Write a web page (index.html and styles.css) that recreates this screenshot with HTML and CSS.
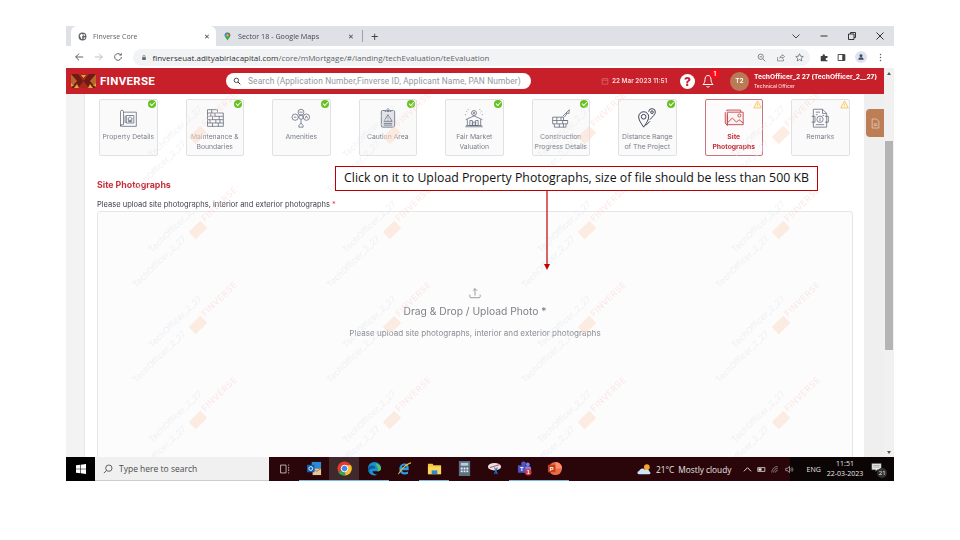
FILE: index.html
```html
<!DOCTYPE html>
<html lang="en">
<head>
<meta charset="utf-8">
<title>Finverse Core</title>
<link rel="stylesheet" href="styles.css">
</head>
<body>
<div class="screen">
  <div class="tabstrip">
    <div class="tab tab-active">
      <svg class="favicon" viewBox="0 0 16 16"><circle cx="8" cy="8" r="7" fill="#5f6368"/><path d="M3 6l3-3 2 1 1 2-2 2 1 3-2 2-1-3zM11 3l2 3-2 1-2-2zM10 10l3-1-1 3-2 1z" fill="#fff"/></svg>
      <span class="tab-title">Finverse Core</span>
      <span class="tab-x">&#10005;</span>
    </div>
    <div class="tab tab-other">
      <svg class="favicon" viewBox="0 0 16 16"><path d="M8 1a5 5 0 0 1 5 5c0 3-3 5-5 9-2-4-5-6-5-9a5 5 0 0 1 5-5z" fill="#34a853"/><path d="M3 6a5 5 0 0 1 5-5l2 1-5 6z" fill="#4285f4"/><path d="M10 1.500a5 5 0 0 1 3 4.500l-3 1z" fill="#ea4335"/><circle cx="8" cy="6" r="2" fill="#fbbc04"/></svg>
      <span class="tab-title tab-title-dark">Sector 18 - Google Maps</span>
      <span class="tab-x">&#10005;</span>
    </div>
    <span class="tab-sep"></span>
    <span class="tab-plus">+</span>
    <div class="win-controls">
      <svg viewBox="0 0 10 10"><path d="M1.500 3.500L5 7l3.500-3.500" fill="none" stroke="#444" stroke-width="1"/></svg>
      <svg viewBox="0 0 10 10"><path d="M1.500 5h7" stroke="#333" stroke-width="1"/></svg>
      <svg viewBox="0 0 10 10"><path d="M1.500 3h5.500v5.500h-5.500zM3.500 3V1.500h5v5H7" fill="none" stroke="#333" stroke-width="1"/></svg>
      <svg viewBox="0 0 10 10"><path d="M1.500 1.500l7 7M8.500 1.500l-7 7" stroke="#333" stroke-width="1"/></svg>
    </div>
  </div>

  <div class="toolbar">
    <svg class="tb-icon" viewBox="0 0 12 12"><path d="M11 6H2M6 2L2 6l4 4" fill="none" stroke="#5f6368" stroke-width="1.200"/></svg>
    <svg class="tb-icon" viewBox="0 0 12 12"><path d="M1 6h9M6 2l4 4-4 4" fill="none" stroke="#bcc0c4" stroke-width="1.200"/></svg>
    <svg class="tb-icon" viewBox="0 0 12 12"><path d="M10 6a4 4 0 1 1-1.200-2.900" fill="none" stroke="#5f6368" stroke-width="1.200"/><path d="M10.500 1v3.200H7.300z" fill="#5f6368"/></svg>
    <div class="omnibox">
      <svg class="lock" viewBox="0 0 10 10"><rect x="2" y="4.500" width="6" height="4.500" fill="#5f6368"/><path d="M3.300 4.500V3a1.700 1.700 0 0 1 3.400 0v1.500" fill="none" stroke="#5f6368"/></svg>
      <span class="url"><b>finverseuat.adityabirlacapital.com</b>/core/mMortgage/#/landing/techEvaluation/teEvaluation</span>
      <div class="omni-actions">
        <svg viewBox="0 0 12 12"><circle cx="5" cy="5" r="3.500" fill="none" stroke="#5f6368"/><path d="M7.700 7.700L11 11M3.500 5h3" stroke="#5f6368"/></svg>
        <svg viewBox="0 0 12 12"><path d="M2 5.500V10.500h8V8M5 7c0-2.500 2-3.500 3.500-3.500V2l3 2.700-3 2.700V5.500C7 5.500 5.800 6 5 7z" fill="none" stroke="#5f6368" stroke-width=".8"/></svg>
        <svg viewBox="0 0 12 12"><path d="M6 1l1.500 3.300 3.500.4-2.600 2.400.7 3.500L6 8.800l-3.100 1.800.7-3.500L1 4.700l3.500-.4z" fill="none" stroke="#5f6368"/></svg>
      </div>
    </div>
    <div class="tb-right">
      <svg viewBox="0 0 12 12"><path d="M1 4h2.500V3a1.500 1.500 0 0 1 3 0v1H10v2.500H9a1.500 1.500 0 0 0 0 3h1V11H1z" fill="#3c4043"/></svg>
      <svg viewBox="0 0 12 12"><path d="M1.500 2h9v8h-9z" fill="none" stroke="#3c4043" stroke-width="1.200"/><path d="M7 2h3.500v8H7z" fill="#3c4043"/></svg>
      <span class="profile"><svg viewBox="0 0 12 12"><circle cx="6" cy="4" r="2.200" fill="#3c4a6b"/><path d="M2 10c0-2.500 2-3.500 4-3.500s4 1 4 3.500z" fill="#3c4a6b"/></svg></span>
      <svg viewBox="0 0 12 12"><circle cx="6" cy="2" r="1" fill="#5f6368"/><circle cx="6" cy="6" r="1" fill="#5f6368"/><circle cx="6" cy="10" r="1" fill="#5f6368"/></svg>
    </div>
  </div>

  <div class="viewport">
    <div class="app">
      <header class="app-header">
        <svg class="brand-logo" viewBox="0 0 25 14"><rect width="25" height="14" fill="#6f1a15"/><path d="M0 0l6 7-6 7zM25 0l-6 7 6 7z" fill="#b8662a"/><path d="M7 0l5.500 7L18 0zM12.500 7L7 14h11z" fill="#a82a1c"/><path d="M3 14l3-4 2 4zM17 14l2-4 3 4zM10 1h5l-2.500 3zM0 9l3 3H0zM25 9l-3 3h3z" fill="#e0a83a"/></svg>
        <span class="brand-name">FINVERSE</span>
        <div class="search">
          <svg viewBox="0 0 12 12"><circle cx="5" cy="5" r="3.300" fill="none" stroke="#333" stroke-width="1.300"/><path d="M7.500 7.500L11 11" stroke="#333" stroke-width="1.500"/></svg>
          <span>Search (Application Number,Finverse ID, Applicant Name, PAN Number)</span>
        </div>
        <svg class="cal" viewBox="0 0 10 10"><path d="M1.500 2h7v7h-7zM1.500 4h7" fill="none" stroke="#e0776f" stroke-width=".8"/></svg>
        <span class="date">22 Mar 2023 11:51</span>
        <span class="help">?</span>
        <span class="bell">
          <svg viewBox="0 0 14 14"><path d="M7 1.500C4.800 1.500 4 3.500 4 5.500c0 2.500-1 4-2 5h10c-1-1-2-2.500-2-5 0-2-.8-4-3-4zM5.500 12.500c.5.700 2.500.7 3 0" fill="none" stroke="#fff" stroke-width="1"/></svg>
          <i class="bell-count">1</i>
        </span>
        <span class="avatar">T2</span>
        <div class="user">
          <strong>TechOfficer_2 27 (TechOfficer_2__27)</strong>
          <span>Technical Officer</span>
        </div>
      </header>

      <div class="app-body">
        <div class="gutter-left"></div>
        <main class="content">
          <div class="steps">
            <div class="card">
              <svg class="card-icon" viewBox="0 0 24 24"><path d="M3 4.500a1.800 1.800 0 0 1 3.600 0V20H5a2 2 0 0 0-2 2V4.500zM6.600 5H22v17H5a2 2 0 0 1-2-2" /><path d="M10 9h9v9h-9zM11.500 13l3-2.500 3 2.500M12.500 12.500V16.500h4v-4M14 16.500v-2h1.200v2M8.500 9v9"/></svg>
              <span class="card-label">Property Details</span>
              <i class="badge badge-ok"></i>
            </div>
            <div class="card">
              <svg class="card-icon" viewBox="0 0 24 24"><path d="M3 2h12v4h7v4h0v4h0v4h0v4H3V2zM3 6h12M3 10h19M3 14h19M3 18h19M8 2v4M12 6v4M7 6v4M17 10v4M9 10v4M13 14v4M6 14v4M18 14v4M9 18v4M16 18v4"/></svg>
              <span class="card-label">Maintenance &amp;<br>Boundaries</span>
              <i class="badge badge-ok"></i>
            </div>
            <div class="card">
              <svg class="card-icon" viewBox="0 0 24 24"><circle cx="12" cy="5" r="3.500"/><circle cx="5" cy="11" r="3.800"/><circle cx="18.500" cy="11" r="3.800"/><circle cx="12" cy="11" r="2.500"/><path d="M3.500 11h3M10 5h4M17 12.500l1.500-3 1.500 3M12 13.500V18M9.500 21l2.500-3 2.500 3v2h-5z"/></svg>
              <span class="card-label">Amenities</span>
              <i class="badge badge-ok"></i>
            </div>
            <div class="card">
              <svg class="card-icon" viewBox="0 0 24 24"><rect x="4" y="3" width="16" height="20" rx="1.500" fill="#e1e3e8"/><circle cx="12" cy="2.500" r="1.500"/><path d="M8 4h8M12 8l5 8H7zM12 11v2.500M12 14.500v.5M7 18.500h10M7 20.500h10"/></svg>
              <span class="card-label">Caution Area</span>
              <i class="badge badge-ok"></i>
            </div>
            <div class="card">
              <svg class="card-icon" viewBox="0 0 24 24"><circle cx="12" cy="6" r="3"/><path d="M11 4.500l2 3M13 4.500l-2 3M12 1v0M3 4l1 1M21 4l-1 1M1.500 8h1M21.500 8h1M5 1.500v1M19 1.500v1M2 14l10-4.500L22 14M4 13.500V21M20 13.500V21M1.500 22.500h21M2.500 21h19M7 15h3v6H7zM14 15h3v6h-3zM10.500 17h3v4h-3z"/></svg>
              <span class="card-label">Fair Market<br>Valuation</span>
              <i class="badge badge-ok"></i>
            </div>
            <div class="card">
              <svg class="card-icon" viewBox="0 0 24 24"><path d="M2 11h13v4h5v4h-2v4H4v-4H2zM2 15h18M4 19h14M7 11v4M12 11v4M7 15v4M14 15v4M10 19v4M15 19v4M14 10l4-4 1 1-3 4M18 6l4-4-.5 4.500z"/></svg>
              <span class="card-label">Construction<br>Progress Details</span>
              <i class="badge badge-ok"></i>
            </div>
            <div class="card">
              <svg class="card-icon card-icon-dark" viewBox="0 0 24 24"><path d="M8 23C4 17 2 14 2 10.500a6 6 0 0 1 12 0C14 14 12 17 8 23z"/><circle cx="8" cy="10.500" r="2.800"/><path d="M15.500 14C19 10 22 7.500 22 5a4 4 0 0 0-8-.5"/><circle cx="18" cy="5" r="1.600"/><path d="M10.500 21l5-5"/></svg>
              <span class="card-label">Distance Range<br>of The Project</span>
              <i class="badge badge-ok"></i>
            </div>
            <div class="card card-active">
              <svg class="card-icon card-icon-red" viewBox="0 0 24 24"><path d="M1.500 5v13l2.500 3V8M4 2.500h16v2.500M2.500 3.500l2-1M4 5h19v15H4z"/><path d="M4 18l6-6 5 5 3-3 5 4"/><circle cx="18.500" cy="9" r="1.800"/></svg>
              <span class="card-label card-label-red">Site<br>Photographs</span>
              <svg class="warn" viewBox="0 0 10 10"><path d="M5 1l4.200 7.800H.8z" fill="#fff8e6" stroke="#f4bf4f" stroke-width=".9"/><path d="M5 4v2.500M5 7.200v.5" stroke="#f4bf4f" stroke-width=".8"/></svg>
            </div>
            <div class="card">
              <svg class="card-icon" viewBox="0 0 24 24"><path d="M4 1.500h11l5 5V23H4zM15 1.500v5h5M7 5h5M7 8h2M15 9h2M2 10h4v7H2M18 10h4v7h-4M7 20h10"/><circle cx="12" cy="13.500" r="3.800"/><path d="M12 12v4M12 10.700v.5"/></svg>
              <span class="card-label">Remarks</span>
              <svg class="warn" viewBox="0 0 10 10"><path d="M5 1l4.200 7.800H.8z" fill="#fff8e6" stroke="#f4bf4f" stroke-width=".9"/><path d="M5 4v2.500M5 7.200v.5" stroke="#f4bf4f" stroke-width=".8"/></svg>
            </div>
          </div>

          <h2 class="section-title">Site Photographs</h2>
          <p class="field-label">Please upload site photographs, interior and exterior photographs <em>*</em></p>
          <div class="dropzone">
            <svg class="upload" viewBox="0 0 14 14"><path d="M1 9v2.500c0 .5.500 1 1 1h10c.5 0 1-.5 1-1V9M7 10V2M4.500 4.300L7 1.800l2.500 2.500" fill="none" stroke="#7c7f85" stroke-width=".9"/></svg>
            <div class="drop-title">Drag &amp; Drop / Upload Photo *</div>
            <div class="drop-sub">Please upload site photographs, interior and exterior photographs</div>
          </div>
        </main>
        <aside class="gutter-right">
          <div class="side-tab">
            <svg viewBox="0 0 12 14"><path d="M1.500 1h6l3 3v9h-9zM3.500 7.500h5M3.500 9.500h5" fill="none" stroke="#e9d2c2" stroke-width="1"/></svg>
          </div>
        </aside>
      </div>
    </div>
    <div class="scrollbar">
      <i class="sb-up"></i>
      <div class="sb-thumb"></div>
      <i class="sb-down"></i>
    </div>

    <svg class="watermarks" viewBox="0 0 818 363">
      <defs>
        <g id="wm">
          <text x="0" y="0" class="wm-text" transform="translate(-46 23) rotate(-44)">TechOfficer_2_27</text>
          <text x="0" y="0" class="wm-text" transform="translate(-62 58) rotate(-44)">TechOfficer_2_27</text>
          <rect x="-8" y="-5" width="16" height="10" class="wm-logo" transform="rotate(-44)"/>
          <text x="0" y="0" class="wm-brand" transform="translate(7 -8) rotate(-44)">FINVERSE</text>
        </g>
      </defs>
      <use href="#wm" x="132" y="41"/><use href="#wm" x="326" y="41"/><use href="#wm" x="521" y="41"/><use href="#wm" x="715" y="41"/>
      <use href="#wm" x="132" y="136"/><use href="#wm" x="326" y="136"/><use href="#wm" x="521" y="136"/><use href="#wm" x="715" y="136"/>
      <use href="#wm" x="132" y="231"/><use href="#wm" x="326" y="231"/><use href="#wm" x="521" y="231"/><use href="#wm" x="715" y="231"/>
      <use href="#wm" x="132" y="326"/><use href="#wm" x="326" y="326"/><use href="#wm" x="521" y="326"/><use href="#wm" x="715" y="326"/>
    </svg>
  </div>

  <footer class="taskbar">
    <div class="start"><svg viewBox="0 0 12 12"><path d="M0 1.600L5 1v4.600H0zM5.700.9L12 0v5.600H5.700zM0 6.300h5v4.800l-5-.7zM5.700 6.300H12V12l-6.300-.9z" fill="#fff"/></svg></div>
    <div class="task-search">
      <svg viewBox="0 0 12 12"><circle cx="7" cy="5" r="3.800" fill="none" stroke="#444"/><path d="M4.300 7.700L1 11" stroke="#444"/></svg>
      <span>Type here to search</span>
    </div>
    <div class="task-apps">
      <span class="app-slot"><svg class="taskview" viewBox="0 0 14 12"><path d="M2 1h7v10H2zM11.500 1h1.500M11.500 4h1.500M11.500 6h1.500M11.500 8h1.500M11.500 11h1.500" fill="none" stroke="#d8d4d4" stroke-width="1"/></svg></span>
      <span class="app-slot running"><svg viewBox="0 0 16 16"><rect x="5" y="1" width="10" height="7" fill="#2c8bd8"/><rect x="6" y="8" width="9" height="7" fill="#e9c79b"/><path d="M6 8l4.500 3L15 8" fill="none" stroke="#a87c50"/><rect x="0" y="4" width="8" height="8" fill="#0f5fb0"/><circle cx="4" cy="8" r="2" fill="none" stroke="#fff"/></svg></span>
      <span class="app-slot running active"><svg viewBox="0 0 16 16"><circle cx="8" cy="8" r="7.500" fill="#e33b2e"/><path d="M8 8L1.500 12A7.500 7.500 0 0 0 9 15.400z" fill="#2da94f"/><path d="M8 4.500h6.900A7.500 7.500 0 0 1 9 15.400z" fill="#fbc02d"/><circle cx="8" cy="8" r="3.500" fill="#4285f4" stroke="#fff"/></svg></span>
      <span class="app-slot running"><svg viewBox="0 0 16 16"><path d="M1 8a7 7 0 0 1 14 0c0 2-2 3-4 3H6c0 2 2 3.500 5 3.500-1 .7-2 1-3 1A7 7 0 0 1 1 8z" fill="#1b8fcf"/><path d="M1 8c1-3 5-4 7-2.500 1 .8 1 2 .5 2.500H6C4 8 2 9 2.500 12 1.500 11 1 9.500 1 8z" fill="#0d5a9c"/><path d="M9 3c3 0 6 2 6 5 0 2-2 3-4 3 1-1 1-2.500 0-4-.5-1.500-1-3-2-4z" fill="#58c45d"/></svg></span>
      <span class="app-slot"><svg viewBox="0 0 16 16"><path d="M12.500 9.800H5.200c.2 2 3.800 3 6.600 1.300v2.600c-4 1.700-9.300.2-9.300-5 0-4.600 4.300-7 7.800-5.500 2 .9 2.400 3.500 2.200 6.600zM5.200 7h4.800c0-2.800-4.400-2.800-4.800 0z" fill="#2f9be0"/><path d="M1.500 14C4 9 11 2.500 15 2" fill="none" stroke="#f5c33b" stroke-width="1.100"/></svg></span>
      <span class="app-slot running"><svg viewBox="0 0 16 16"><path d="M1 3h5l1 1.500h8V14H1z" fill="#f3c63f"/><rect x="1" y="6" width="14" height="8" fill="#fbd75e"/><rect x="5" y="10" width="6" height="4" fill="#2d89c9"/></svg></span>
      <span class="app-slot"><svg viewBox="0 0 14 16"><rect x="1" y="0" width="12" height="16" fill="#5a7183"/><rect x="3" y="2" width="8" height="3" fill="#bcd"/><path d="M3 7h2v2H3zM6 7h2v2H6zM9 7h2v2H9zM3 10h2v2H3zM6 10h2v2H6zM9 10h2v2H9z" fill="#e8eef2"/></svg></span>
      <span class="app-slot"><svg viewBox="0 0 16 16"><ellipse cx="8" cy="6" rx="7" ry="4" fill="#e4e6ea"/><path d="M3 7l10-3" stroke="#d43c3c"/><path d="M8 7l3 7M11 7l-3 7" stroke="#2b78c5" stroke-width="1.200"/></svg></span>
      <span class="app-slot running"><svg viewBox="0 0 16 16"><circle cx="11.500" cy="3.500" r="2" fill="#7b83eb"/><circle cx="7" cy="3" r="2.500" fill="#5059c9"/><rect x="6" y="5.500" width="9" height="7" rx="2" fill="#7b83eb"/><rect x="1" y="4.500" width="8" height="8" fill="#4b53bc"/><text x="5" y="11" class="teams-t">T</text><circle cx="12" cy="12" r="3.500" fill="#d13438"/><text x="12" y="14.200" class="teams-n">1</text></svg></span>
      <span class="app-slot running"><svg viewBox="0 0 16 16"><circle cx="9" cy="8" r="7" fill="#ed6c47"/><path d="M9 1a7 7 0 0 1 7 7H9z" fill="#ff8f6b"/><rect x="1" y="4" width="8" height="8" fill="#c43e1c"/><text x="5" y="10.800" class="teams-t">P</text></svg></span>
    </div>
    <div class="weather">
      <svg viewBox="0 0 16 12"><circle cx="10.500" cy="4" r="3" fill="#f6a623"/><path d="M2 11.500c-2 0-2-3 .3-3.300C3 5.500 7 4.500 8.500 7c2-1 5 0 5 2.200 1 0 1.500 2.300-.5 2.300z" fill="#cfe3f5"/></svg>
      <span>21°C</span><span>Mostly cloudy</span>
    </div>
    <div class="tray">
      <svg viewBox="0 0 10 10"><path d="M1 7l4-4 4 4" fill="none" stroke="#eee" stroke-width="1"/></svg>
      <svg viewBox="0 0 12 10"><path d="M1 2.500h9.500v5H1z" fill="none" stroke="#eee"/><path d="M2 3.500h4v3H2z" fill="#eee"/></svg>
      <svg viewBox="0 0 12 10"><path d="M1 9a8 8 0 0 1 8-8M3.500 9A5.500 5.500 0 0 1 9 3.500M6 9a3 3 0 0 1 3-3" fill="none" stroke="#bbb" stroke-width=".8"/></svg>
      <svg viewBox="0 0 12 10"><path d="M1 3.500h2L6 1v8L3 6.500H1zM7.500 3c1 1 1 3 0 4M9 2c2 2 2 4 0 6" fill="none" stroke="#ddd" stroke-width=".8"/></svg>
      <span class="lang">ENG</span>
      <div class="clock"><span>11:51</span><span>22-03-2023</span></div>
      <span class="notif">
        <svg viewBox="0 0 14 12"><path d="M1 1h12v8H8l-2 2V9H1zM3 3.500h8M3 5.500h8" fill="#e8e8e8" stroke="#555" stroke-width=".5"/></svg>
        <i>21</i>
      </span>
    </div>
  </footer>
</div>

<div class="callout">Click on it to Upload Property Photographs, size of file should be less than 500 KB</div>
<svg class="callout-arrow" viewBox="0 0 8 80"><path d="M4 0V74" stroke="#c00000" stroke-width="1.200"/><path d="M1 73h6l-3 6z" fill="#c00000"/></svg>
</body>
</html>
```

FILE: styles.css
```css
* { box-sizing: border-box; }
html, body { margin: 0; padding: 0; background: #fff; }
body { width: 960px; height: 540px; overflow: hidden; position: relative; font-family: "Open Sans", "Liberation Sans", sans-serif; }
svg { display: block; flex: none; }

.screen { width: 828px; height: 455px; margin: 26px 0 0 66px; display: flex; flex-direction: column; overflow: hidden; filter: blur(0.3px); }

/* browser chrome */
.tabstrip { height: 20px; background: #dee1e6; display: flex; align-items: stretch; padding-left: 5px; flex: none; position: relative; }
.tab { width: 145px; display: flex; align-items: center; font-size: 7px; color: #5f6368; }
.tab-active { background: #fff; border-radius: 6px 6px 0 0; padding: 0 6px 0 7px; }
.tab-other { padding: 0 7px 0 7px; }
.favicon { width: 9px; height: 9px; margin-right: 6px; }
.tab-title { flex: 1; white-space: nowrap; }
.tab-title-dark { color: #45494e; font-size: 7.200px; }
.tab-x { font-size: 7px; color: #3c4043; }
.tab-sep { width: 1px; height: 12px; background: #9da1a6; align-self: center; margin-left: 1px; }
.tab-plus { font-size: 13px; line-height: 20px; color: #3c4043; margin-left: 8px; }
.win-controls { margin-left: auto; display: flex; align-items: center; gap: 18px; padding-right: 9px; }
.win-controls svg { width: 10px; height: 10px; }

.toolbar { height: 22px; background: #fff; display: flex; align-items: center; padding-left: 8px; flex: none; }
.tb-icon { width: 10px; height: 10px; margin-right: 9.500px; }
.omnibox { width: 677px; height: 17px; border-radius: 9px; background: #f1f3f4; margin-left: 0; display: flex; align-items: center; padding: 0 0 0 8px; }
.lock { width: 6px; height: 7px; margin-right: 6px; }
.url { font-size: 8px; color: #5f6368; white-space: nowrap; font-family: "Open Sans", sans-serif; }
.url b { font-weight: 400; color: #303134; }
.omni-actions { margin-left: auto; display: flex; gap: 10px; padding-right: 6px; }
.omni-actions svg { width: 9px; height: 9px; }
.tb-right { flex: 1; display: flex; align-items: center; justify-content: space-between; padding: 0 9px 0 10px; }
.tb-right svg { width: 9px; height: 9px; }
.profile { width: 12px; height: 12px; background: #dfe3ee; border-radius: 50%; display: flex; align-items: center; justify-content: center; }
.profile svg { width: 8px; height: 8px; }

.viewport { flex: 1; min-height: 0; display: flex; position: relative; }
.app { flex: 1; min-width: 0; display: flex; flex-direction: column; font-family: Inter, Roboto, sans-serif; }

/* app header */
.app-header { height: 26px; background: #c8202b; display: flex; align-items: center; padding-left: 5px; color: #fff; flex: none; }
.brand-logo { width: 25px; height: 14px; }
.brand-name { font-family: Roboto, sans-serif; font-weight: 700; font-size: 11.500px; letter-spacing: .3px; margin-left: 4px; width: 126px; }
.search { width: 305px; height: 16px; background: #fff; border-radius: 8px; display: flex; align-items: center; padding-left: 7px; color: #94979d; font-size: 8.400px; font-family: Roboto, sans-serif; letter-spacing: .12px; white-space: nowrap; }
.search svg { width: 8px; height: 8px; margin-right: 7px; }
.cal { width: 8px; height: 8px; margin-left: 70px; }
.date { font-size: 6.400px; font-weight: 600; color: #f6d9d9; margin-left: 3px; width: 56px; white-space: nowrap; }
.help { width: 15px; height: 15px; border-radius: 50%; background: #fff; color: #c8202b; font-size: 12px; font-weight: 800; text-align: center; line-height: 15px; margin-left: 12px; }
.bell { position: relative; width: 14px; height: 14px; margin-left: 6px; }
.bell svg { width: 14px; height: 14px; }
.bell-count { position: absolute; top: -5px; right: -5px; width: 10px; height: 10px; background: #fb0d1a; border-radius: 50%; font-size: 5.500px; font-style: normal; font-weight: 700; text-align: center; line-height: 10px; }
.avatar { width: 19px; height: 19px; border-radius: 50%; background: #b87b55; font-size: 6.500px; font-weight: 600; text-align: center; line-height: 19px; margin-left: 15px; }
.user { margin-left: 5px; display: flex; flex-direction: column; white-space: nowrap; }
.user strong { font-size: 6.700px; font-weight: 700; line-height: 9px; }
.user span { font-size: 5px; font-weight: 500; line-height: 8px; color: #f5dada; }

/* body */
.app-body { flex: 1; min-height: 0; display: flex; }
.gutter-left { width: 19px; background: #f3f3f3; box-shadow: inset -1px 0 1px #e8e8e8; flex: none; }
.content { flex: 1; min-width: 0; background: #fff; padding: 5px 11px 0 12px; overflow: hidden; }
.gutter-right { width: 20px; background: #efefef; flex: none; padding: 15px 0 0 2px; }
.side-tab { width: 18px; height: 28px; background: #bd7d55; border-radius: 4px 0 0 4px; display: flex; align-items: center; justify-content: center; }
.side-tab svg { width: 9px; height: 11px; }

.steps { display: grid; grid-template-columns: repeat(9, 58.500px); column-gap: 28px; margin-left: 2px; }
.card { position: relative; height: 57px; background: #fafafa; border: 1px solid #e0e1e3; border-radius: 2px; padding-top: 8px; display: flex; flex-direction: column; align-items: center; }
.card-active { border-color: #c9757b; background: #fdfbfb; }
.card-icon { width: 20px; height: 20px; fill: none; stroke: #5c6577; stroke-width: .9; }
.card-icon-dark { stroke: #3c4454; stroke-width: 1.200; }
.card-icon-red { stroke: #c0474f; stroke-width: 1.100; fill: #fdf3f3; }
.card-label { margin-top: 4px; font-size: 6.800px; line-height: 10px; color: #7c818b; text-align: center; white-space: nowrap; font-family: Inter, sans-serif; }
.card-label-red { color: #c4303c; font-weight: 700; }
.badge { position: absolute; top: 0; right: 1px; width: 8px; height: 8px; border-radius: 50%; background: #67c11f; }
.badge-ok::after { content: ""; position: absolute; left: 2.200px; top: 1.800px; width: 3.500px; height: 2px; border-left: 1px solid #fff; border-bottom: 1px solid #fff; transform: rotate(-45deg); }
.warn { position: absolute; top: 0; right: 0; width: 9px; height: 9px; }

.section-title { margin: 24px 0 0; font-size: 8.800px; line-height: 10px; font-weight: 700; color: #c8303c; font-family: Inter, sans-serif; }
.field-label { margin: 10px 0 0; font-size: 7.500px; line-height: 10px; color: #3d4148; white-space: nowrap; font-family: Inter, sans-serif; }
.field-label em { color: #e0454f; font-style: normal; }
.dropzone { margin-top: 1px; height: 300px; background: #fcfcfc; border: 1px solid #e6e6e6; border-radius: 3px; padding-top: 75px; display: flex; flex-direction: column; align-items: center; }
.upload { width: 12px; height: 12px; }
.drop-title { margin-top: 6px; font-size: 10.300px; line-height: 12px; color: #7e8187; font-family: Inter, sans-serif; }
.drop-sub { margin-top: 11px; font-size: 8.100px; line-height: 10px; color: #8a8d93; font-family: Inter, sans-serif; }

/* scrollbar */
.scrollbar { width: 10px; background: #f1f1f1; position: relative; flex: none; }
.sb-thumb { position: absolute; top: 73px; left: 1px; width: 8px; height: 209px; background: #b4b4b4; }
.sb-up, .sb-down { position: absolute; left: 3px; width: 0; height: 0; border-left: 2.500px solid transparent; border-right: 2.500px solid transparent; }
.sb-up { top: 4px; border-bottom: 3px solid #555; }
.sb-down { bottom: 3px; border-top: 3px solid #555; }

/* watermark */
.watermarks { position: absolute; left: 0; top: 26px; width: 818px; height: 363px; pointer-events: none; }
.wm-text { font-family: Inter, sans-serif; font-size: 8.500px; fill: #e4e8ef; fill-opacity: .6; }
.wm-brand { font-family: Inter, sans-serif; font-size: 8.500px; letter-spacing: .6px; fill: #f9d9d6; fill-opacity: .6; }
.wm-logo { fill: #fbdccb; fill-opacity: .55; }

/* taskbar */
.taskbar { height: 24px; background: #2a060a; display: flex; align-items: stretch; flex: none; }
.start { width: 29px; background: #000; display: flex; align-items: center; justify-content: center; }
.start svg { width: 10px; height: 10px; }
.task-search { width: 174px; background: #f0f0f0; border-bottom: 1px solid #ccc; display: flex; align-items: center; padding-left: 8px; font-size: 8.500px; color: #4c4c4c; }
.task-search svg { width: 10px; height: 10px; margin-right: 6px; }
.task-apps { display: flex; margin-left: 0; width: 305px; }
.app-slot { width: 30px; display: flex; align-items: center; justify-content: center; border-bottom: 1px solid transparent; }
.app-slot svg { width: 15px; height: 15px; }
.app-slot .taskview { width: 11px; height: 10px; }
.running { border-bottom-color: #76b9ed; }
.active { background: #40292c; }
.teams-t { font-family: "Liberation Sans", sans-serif; font-size: 6px; font-weight: 700; fill: #fff; text-anchor: middle; }
.teams-n { font-family: "Liberation Sans", sans-serif; font-size: 6px; font-weight: 700; fill: #fff; text-anchor: middle; }
.weather { display: flex; align-items: center; gap: 4px; margin-left: 63px; font-size: 8.300px; color: #e8e4e4; white-space: nowrap; width: 100px; flex: none; }
.weather svg { width: 15px; height: 12px; }
.tray { flex: 1; min-width: 0; display: flex; align-items: center; background: linear-gradient(to right, #2a060a 34%, #0c0506 34%); padding-left: 5.500px; color: #e8e8e8; font-size: 7px; }
.tray svg { width: 9px; height: 9px; margin-right: 5px; }
.lang { margin-left: 8px; }
.clock { display: flex; flex-direction: column; align-items: center; margin-left: 6px; line-height: 10px; font-size: 7px; white-space: nowrap; }
.notif { position: relative; width: 14px; height: 14px; margin-left: 8px; flex: none; }
.notif svg { width: 11px; height: 11px; margin: 0; }
.notif i { position: absolute; right: -2px; bottom: -2px; width: 10px; height: 10px; border-radius: 50%; background: #333; font-style: normal; font-size: 6px; line-height: 10px; text-align: center; color: #eee; }

/* slide annotation */
.callout { position: absolute; left: 335px; top: 166px; width: 483px; height: 25px; background: #fff; border: 1.500px solid #c00000; font-family: "Open Sans", sans-serif; font-size: 12.300px; line-height: 22px; color: #111; text-align: center; white-space: nowrap; }
.callout-arrow { position: absolute; left: 543px; top: 191px; width: 8px; height: 80px; }
```
